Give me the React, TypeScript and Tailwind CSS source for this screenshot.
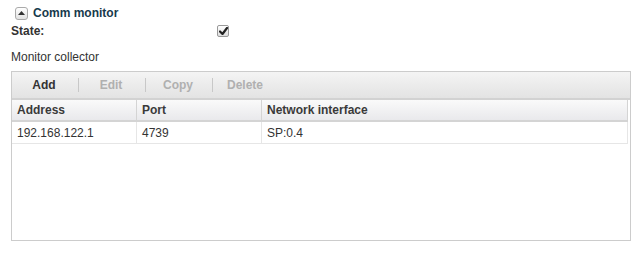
import React from 'react';

const columns = [
  { key: 'address', label: 'Address', width: 'w-[125px]' },
  { key: 'port', label: 'Port', width: 'w-[125px]' },
  { key: 'iface', label: 'Network interface', width: 'flex-1' },
];

const rows = [{ address: '192.168.122.1', port: '4739', iface: 'SP:0.4' }];

const tools = [
  { label: 'Add', enabled: true },
  { label: 'Edit', enabled: false },
  { label: 'Copy', enabled: false },
  { label: 'Delete', enabled: false },
];

export default function App() {
  return (
    <div className="w-[642px] h-[253px] bg-white text-[12px] text-[#333] font-['Liberation_Sans',Arial,sans-serif]">
      {/* Section header */}
      <div className="flex items-center h-[14px] pt-[12px] pl-[15px]">
        <span className="w-[13px] h-[13px] rounded-[3px] border border-[#aaa] bg-gradient-to-b from-white to-[#e2e2e2] flex items-center justify-center">
          <svg width="7" height="4" viewBox="0 0 7 4">
            <path d="M0 4 L3.5 0 L7 4 Z" fill="#333" />
          </svg>
        </span>
        <span className="ml-[5px] font-bold text-[#173a4c] leading-none">Comm monitor</span>
      </div>

      {/* State row */}
      <div className="flex items-center h-[14px] mt-[10px] pl-[11px]">
        <span className="font-bold w-[206px]">State:</span>
        <span className="w-[12px] h-[12px] rounded-[2px] border border-[#999] bg-gradient-to-b from-white to-[#ddd] flex items-center justify-center">
          <svg width="9" height="8" viewBox="0 0 9 8">
            <path d="M1 4.5 L3.5 7 L8 1" stroke="#222" strokeWidth="2.2" fill="none" strokeLinecap="round" strokeLinejoin="round" />
          </svg>
        </span>
      </div>

      <div className="pl-[11px] mt-[12px] leading-[14px]">Monitor collector</div>

      {/* Grid */}
      <div className="ml-[11px] mt-[7px] w-[620px] h-[170px] border border-[#ccc] flex flex-col">
        <div className="h-[28px] shrink-0 flex items-center bg-gradient-to-b from-[#f4f4f4] to-[#e3e3e3] border-b-2 border-[#d2d2d2]">
          {tools.map((t, i) => (
            <React.Fragment key={t.label}>
              {i > 0 && <span className="w-px h-[14px] bg-[#c8c8c8]" />}
              <span
                className={`w-[66px] pr-[2px] text-center font-bold ${t.enabled ? 'text-[#333]' : 'text-[#b0b0b0]'}`}
              >
                {t.label}
              </span>
            </React.Fragment>
          ))}
        </div>

        <div className="flex shrink-0 h-[22px] w-[616px] bg-gradient-to-b from-[#fafafa] to-[#e9e9ec] border-b-2 border-[#d4d4d4] border-r border-r-[#d4d4d4]">
          {columns.map((c, i) => (
            <div
              key={c.key}
              className={`${c.width} flex items-center pl-[5px] font-bold text-[#3a3a3a] ${i < columns.length - 1 ? 'border-r border-[#d4d4d4]' : ''}`}
            >
              {c.label}
            </div>
          ))}
        </div>

        {rows.map((r) => (
          <div key={r.address} className="flex shrink-0 h-[22px] w-[616px] border-b border-r border-[#e6e6e6]">
            <div className="w-[125px] flex items-center pl-[5px] border-r border-[#e6e6e6]">{r.address}</div>
            <div className="w-[125px] flex items-center pl-[5px] border-r border-[#e6e6e6]">{r.port}</div>
            <div className="flex-1 flex items-center pl-[5px]">{r.iface}</div>
          </div>
        ))}
      </div>
    </div>
  );
}
